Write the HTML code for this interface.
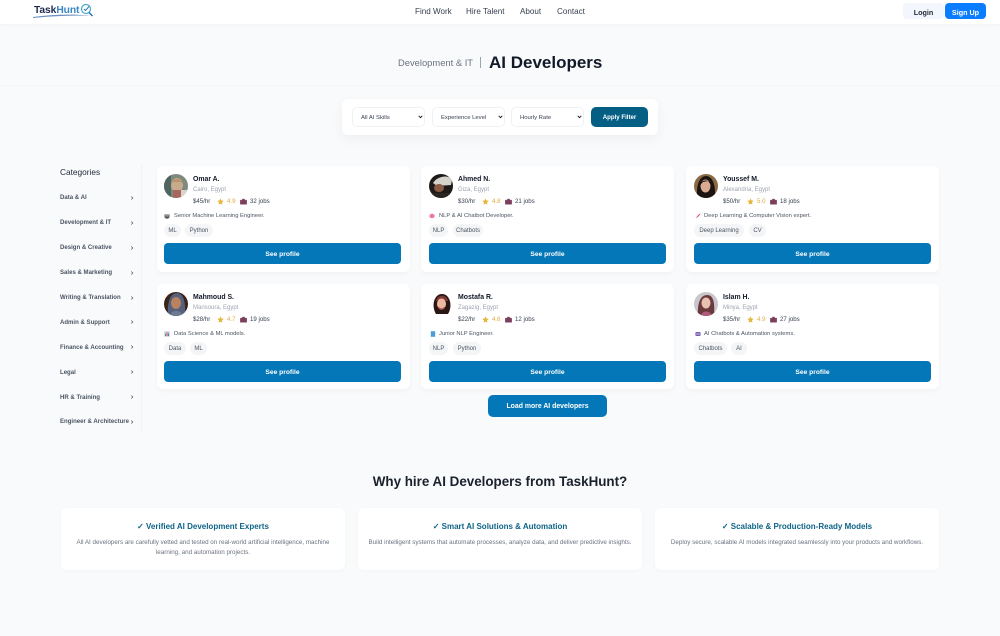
<!DOCTYPE html>
<html lang="en">
<head>
<meta charset="utf-8">
<title>AI Developers - TaskHunt</title>
<style>
*{box-sizing:border-box;margin:0;padding:0}
html,body{width:1000px;height:636px;overflow:hidden;background:#f8fafc;font-family:"Liberation Sans",Arial,sans-serif;color:#1f2937}
.a{position:absolute;white-space:nowrap;line-height:1}
#hd{position:absolute;left:0;top:0;width:1000px;height:24px;background:#fff;box-shadow:0 1px 3px rgba(15,23,42,.03)}
.nav{font-size:8.1px;color:#374151;top:8px}
.box{position:absolute;background:#fff;border-radius:6px;box-shadow:0 2px 6px rgba(15,23,42,.035)}
.sel{position:absolute;top:107px;width:73px;height:20px;background:#fff;border:1px solid #eef1f5;border-radius:5px;font-size:5.9px;color:#374151;line-height:20.5px;padding-left:8px}
.sel svg{position:absolute;right:1.5px;top:7px}
.cat{position:absolute;left:60px;margin-top:1px;font-size:6.05px;font-weight:bold;color:#4b5563;line-height:1;white-space:nowrap}
.chev{position:absolute;left:129.5px;width:4px;height:6px}
.card{position:absolute;width:253px;height:106px;background:#fff;border-radius:6px;box-shadow:0 2px 6px rgba(15,23,42,.035)}
.av{position:absolute;left:7px;top:8px;width:24px;height:24px;border-radius:50%;overflow:hidden}
.n{position:absolute;left:36px;top:10.5px;font-size:6.9px;font-weight:bold;color:#111827;line-height:1;white-space:nowrap}
.l{position:absolute;left:36px;top:21px;font-size:6px;color:#9ca3af;line-height:1;white-space:nowrap}
.m{position:absolute;left:36px;top:31.5px;height:7px;font-size:6.1px;color:#374151;line-height:7px;white-space:nowrap}
.m span,.m svg{position:absolute;top:0}
.m .r{color:#e3a93c}
.d{position:absolute;left:17px;top:47.5px;font-size:5.8px;color:#4b5563;line-height:1;white-space:nowrap}
.ic{position:absolute;left:7px;top:46.5px;width:6px;height:6px}
.t{position:absolute;top:58px;height:13px;border-radius:7px;background:#f4f5f7;font-size:6px;color:#4b5563;line-height:14.5px;text-align:center;white-space:nowrap}
.b{position:absolute;left:7px;top:77px;width:237px;height:21px;border-radius:4px;background:#0477b8;color:#fff;font-size:6.7px;font-weight:bold;line-height:23px;text-align:center}
.x{left:37px}
.why{position:absolute;top:508px;width:284px;height:62px;background:#fff;border-radius:6px;box-shadow:0 1px 4px rgba(15,23,42,.03);text-align:center}
.why h3{position:absolute;left:0;right:0;top:14px;font-size:8px;line-height:9px;color:#0d6488}
.why p{position:absolute;left:10px;right:10px;top:29.5px;font-size:6.25px;line-height:10.4px;color:#6b7280}
</style>
</head>
<body>

<div id="hd"></div>
<svg class="a" style="left:31px;top:1px" width="64" height="20" viewBox="0 0 64 20">
  <path d="M2 16C20 13.5 40 13 60 14.5C40 14.500 20 15 2 17Z" fill="#6a8fc0"/>
  <circle cx="55" cy="8" r="4.5" fill="none" stroke="#4aa9c9" stroke-width="1.2"/>
  <path d="M53 8l1.500 1.500 3.500-4" fill="none" stroke="#2c7fa8" stroke-width="1"/>
  <path d="M58 11.500l3.500 3.500" stroke="#1f6fae" stroke-width="1.400"/>
</svg>
<div class="a" style="left:34px;top:5.5px;font-size:10.3px;font-weight:bold;letter-spacing:-.1px;color:#1f2a4d">Task<span style="color:#3a86c4">Hunt</span></div>

<div class="a nav" style="left:415px">Find Work</div>
<div class="a nav" style="left:466px">Hire Talent</div>
<div class="a nav" style="left:520px">About</div>
<div class="a nav" style="left:557px">Contact</div>

<div class="a" style="left:903px;top:3px;width:41px;height:16px;background:#f3f6fc;border-radius:4px;font-size:7.2px;font-weight:bold;color:#1f2937;line-height:19px;text-align:center">Login</div>
<div class="a" style="left:945px;top:3px;width:41px;height:16px;background:#0a7cff;border-radius:4px;font-size:7.2px;font-weight:bold;color:#fff;line-height:19px;text-align:center">Sign Up</div>

<div class="a" style="left:0;top:85px;width:1000px;height:1px;background:#f3f5f8"></div>

<div class="a" style="left:398px;top:57.5px;font-size:9.4px;color:#6b7280">Development &amp; IT</div>
<div class="a" style="left:480px;top:57px;width:1px;height:11px;background:#9ca3af"></div>
<div class="a" style="left:489px;top:54px;font-size:17px;font-weight:bold;color:#111827">AI Developers</div>

<div class="box" style="left:342px;top:99px;width:316px;height:36px;box-shadow:0 4px 12px rgba(15,23,42,.05)"></div>
<div class="sel" style="left:352px">All AI Skills<svg width="5" height="4" viewBox="0 0 5 4"><path d="M.7.8l1.800 1.900L4.300.8" fill="none" stroke="#222" stroke-width=".9"/></svg></div>
<div class="sel" style="left:432px">Experience Level<svg width="5" height="4" viewBox="0 0 5 4"><path d="M.7.8l1.800 1.900L4.300.8" fill="none" stroke="#222" stroke-width=".9"/></svg></div>
<div class="sel" style="left:511px">Hourly Rate<svg width="5" height="4" viewBox="0 0 5 4"><path d="M.7.8l1.800 1.900L4.300.8" fill="none" stroke="#222" stroke-width=".9"/></svg></div>
<div class="a" style="left:591px;top:107px;width:57px;height:20px;background:#055f85;border-radius:5px;font-size:6.1px;font-weight:bold;color:#fff;line-height:22px;text-align:center">Apply Filter</div>

<div class="a" style="left:60px;top:167.5px;font-size:8.3px;color:#1f2937">Categories</div>
<div class="a" style="left:141px;top:164px;width:1px;height:268px;background:#f1f3f6"></div>
<div class="cat" style="top:194px">Data &amp; AI</div>
<div class="cat" style="top:219px">Development &amp; IT</div>
<div class="cat" style="top:244px">Design &amp; Creative</div>
<div class="cat" style="top:269px">Sales &amp; Marketing</div>
<div class="cat" style="top:294px">Writing &amp; Translation</div>
<div class="cat" style="top:319px">Admin &amp; Support</div>
<div class="cat" style="top:343.5px">Finance &amp; Accounting</div>
<div class="cat" style="top:368.5px">Legal</div>
<div class="cat" style="top:393.5px">HR &amp; Training</div>
<div class="cat" style="top:418px">Engineer &amp; Architecture</div>
<svg class="chev" style="top:195px" viewBox="0 0 4 6"><path d="M1.300 1.500L2.800 3 1.300 4.500" fill="none" stroke="#4b5563" stroke-width=".7"/></svg>
<svg class="chev" style="top:220px" viewBox="0 0 4 6"><path d="M1.300 1.500L2.800 3 1.300 4.500" fill="none" stroke="#4b5563" stroke-width=".7"/></svg>
<svg class="chev" style="top:245px" viewBox="0 0 4 6"><path d="M1.300 1.500L2.800 3 1.300 4.500" fill="none" stroke="#4b5563" stroke-width=".7"/></svg>
<svg class="chev" style="top:269.5px" viewBox="0 0 4 6"><path d="M1.300 1.500L2.800 3 1.300 4.500" fill="none" stroke="#4b5563" stroke-width=".7"/></svg>
<svg class="chev" style="top:294.5px" viewBox="0 0 4 6"><path d="M1.300 1.500L2.800 3 1.300 4.500" fill="none" stroke="#4b5563" stroke-width=".7"/></svg>
<svg class="chev" style="top:319px" viewBox="0 0 4 6"><path d="M1.300 1.500L2.800 3 1.300 4.500" fill="none" stroke="#4b5563" stroke-width=".7"/></svg>
<svg class="chev" style="top:344px" viewBox="0 0 4 6"><path d="M1.300 1.500L2.800 3 1.300 4.500" fill="none" stroke="#4b5563" stroke-width=".7"/></svg>
<svg class="chev" style="top:369px" viewBox="0 0 4 6"><path d="M1.300 1.500L2.800 3 1.300 4.500" fill="none" stroke="#4b5563" stroke-width=".7"/></svg>
<svg class="chev" style="top:394px" viewBox="0 0 4 6"><path d="M1.300 1.500L2.800 3 1.300 4.500" fill="none" stroke="#4b5563" stroke-width=".7"/></svg>
<svg class="chev" style="top:418.5px" viewBox="0 0 4 6"><path d="M1.300 1.500L2.800 3 1.300 4.500" fill="none" stroke="#4b5563" stroke-width=".7"/></svg>

<!-- Row 1 -->
<div class="card" style="left:157px;top:166px">
  <svg class="av" viewBox="0 0 24 24"><rect width="24" height="24" fill="#7d8a7c"/><rect width="7" height="24" fill="#4f6660"/><ellipse cx="13" cy="11" rx="6" ry="7" fill="#c8ab8c"/><path d="M7 10C8 3 18 3 19 10L17 8H9Z" fill="#b89470"/><rect x="9" y="16" width="8" height="8" fill="#a8665c"/><rect x="17" y="16" width="7" height="8" fill="#d9d5cd"/></svg>
  <div class="n">Omar A.</div><div class="l">Cairo, Egypt</div>
  <div class="m"><span style="left:0">$45/hr</span><svg style="left:24px" width="7" height="7" viewBox="0 0 10 10"><path d="M5 .5l1.400 3 3.200.4-2.400 2.200.6 3.200L5 8.200 2.200 9.300l.6-3.200L.4 3.900l3.200-.4z" fill="#e5b53d"/></svg><span class="r" style="left:34px">4.9</span><svg style="left:47px" width="7" height="7" viewBox="0 0 10 10"><path d="M.5 3h9v6h-9zM3.500 3V1.500h3V3" fill="#7b3f5d" stroke="#7b3f5d" stroke-width=".6"/></svg><span style="left:57px">32 jobs</span></div>
  <svg class="ic" viewBox="0 0 6 6"><path d="M.5 1.500h5v2.500C5.500 5 4 5.700 3 5.700S.5 5 .5 4z" fill="#555"/><rect x="1" y="2.500" width="4" height=".8" fill="#ccc"/></svg>
  <div class="d">Senior Machine Learning Engineer.</div>
  <div class="t" style="left:7px;width:17px">ML</div><div class="t" style="left:28px;width:28px">Python</div>
  <div class="b">See profile</div>
</div>
<div class="card" style="left:421px;top:166px">
  <svg class="av" style="left:8px" viewBox="0 0 24 24"><rect width="24" height="24" fill="#1d1a18"/><path d="M4 9C8 2 20 0 23 6L22 11 8 12Z" fill="#d5d2cc"/><ellipse cx="10" cy="14" rx="5" ry="4" fill="#8a5a44"/><rect y="19" width="24" height="5" fill="#2a2421"/></svg>
  <div class="n x">Ahmed N.</div><div class="l x">Giza, Egypt</div>
  <div class="m x"><span style="left:0">$30/hr</span><svg style="left:24px" width="7" height="7" viewBox="0 0 10 10"><path d="M5 .5l1.400 3 3.200.4-2.400 2.200.6 3.200L5 8.200 2.200 9.300l.6-3.200L.4 3.900l3.200-.4z" fill="#e5b53d"/></svg><span class="r" style="left:34px">4.8</span><svg style="left:47px" width="7" height="7" viewBox="0 0 10 10"><path d="M.5 3h9v6h-9zM3.500 3V1.500h3V3" fill="#7b3f5d" stroke="#7b3f5d" stroke-width=".6"/></svg><span style="left:57px">21 jobs</span></div>
  <svg class="ic" style="left:8px" viewBox="0 0 6 6"><ellipse cx="3" cy="3" rx="2.800" ry="2.200" fill="#ee7fae"/><path d="M3 1v4" stroke="#c9598a" stroke-width=".4"/></svg>
  <div class="d" style="left:18px">NLP &amp; AI Chatbot Developer.</div>
  <div class="t" style="left:8px;width:19px">NLP</div><div class="t" style="left:32px;width:30px">Chatbots</div>
  <div class="b" style="left:8px">See profile</div>
</div>
<div class="card" style="left:686px;top:166px">
  <svg class="av" style="left:8px" viewBox="0 0 24 24"><rect width="24" height="24" fill="#8a6a45"/><path d="M3 24C2 8 7 2 12 2s10 6 9 22Z" fill="#1c1412"/><ellipse cx="11.500" cy="12" rx="5" ry="6.500" fill="#d8ab92"/><path d="M6 11C7 5 16 5 17 11L14 7 9 8Z" fill="#1c1412"/></svg>
  <div class="n x">Youssef M.</div><div class="l x">Alexandria, Egypt</div>
  <div class="m x"><span style="left:0">$50/hr</span><svg style="left:24px" width="7" height="7" viewBox="0 0 10 10"><path d="M5 .5l1.400 3 3.200.4-2.400 2.200.6 3.200L5 8.200 2.200 9.300l.6-3.200L.4 3.900l3.200-.4z" fill="#e5b53d"/></svg><span class="r" style="left:34px">5.0</span><svg style="left:47px" width="7" height="7" viewBox="0 0 10 10"><path d="M.5 3h9v6h-9zM3.500 3V1.500h3V3" fill="#7b3f5d" stroke="#7b3f5d" stroke-width=".6"/></svg><span style="left:57px">18 jobs</span></div>
  <svg class="ic" style="left:9px" viewBox="0 0 6 6"><path d="M5.500.5C4 1 2.500 2.500 1.800 3.800L.5 5.500 2.300 4.300C3.600 3.500 5 2 5.500.5Z" fill="#d84a6a"/></svg>
  <div class="d" style="left:18px">Deep Learning &amp; Computer Vision expert.</div>
  <div class="t" style="left:8px;width:50px">Deep Learning</div><div class="t" style="left:63px;width:17px">CV</div>
  <div class="b" style="left:8px">See profile</div>
</div>

<!-- Row 2 -->
<div class="card" style="left:157px;top:284px;height:105px">
  <svg class="av" viewBox="0 0 24 24"><rect width="24" height="24" fill="#3a2418"/><path d="M4 24C3 8 7 1 13 1s9 8 8 23Z" fill="#54607c"/><ellipse cx="12" cy="11" rx="5" ry="6" fill="#b9835f"/><path d="M6 24C7 17 17 17 19 24Z" fill="#6d7a92"/></svg>
  <div class="n">Mahmoud S.</div><div class="l">Mansoura, Egypt</div>
  <div class="m"><span style="left:0">$28/hr</span><svg style="left:24px" width="7" height="7" viewBox="0 0 10 10"><path d="M5 .5l1.400 3 3.200.4-2.400 2.200.6 3.200L5 8.200 2.200 9.300l.6-3.200L.4 3.900l3.200-.4z" fill="#e5b53d"/></svg><span class="r" style="left:34px">4.7</span><svg style="left:47px" width="7" height="7" viewBox="0 0 10 10"><path d="M.5 3h9v6h-9zM3.500 3V1.500h3V3" fill="#7b3f5d" stroke="#7b3f5d" stroke-width=".6"/></svg><span style="left:57px">19 jobs</span></div>
  <svg class="ic" viewBox="0 0 6 6"><rect x=".3" y=".3" width="5.400" height="5.400" fill="#c7ccd8"/><rect x="1" y="3" width="1" height="2" fill="#4aa06a"/><rect x="2.500" y="1.500" width="1" height="3.500" fill="#d8566a"/><rect x="4" y="2.300" width="1" height="2.700" fill="#4a7fc0"/></svg>
  <div class="d">Data Science &amp; ML models.</div>
  <div class="t" style="left:7px;width:22px">Data</div><div class="t" style="left:33px;width:17px">ML</div>
  <div class="b">See profile</div>
</div>
<div class="card" style="left:421px;top:284px;height:105px">
  <svg class="av" style="left:8px" viewBox="0 0 24 24"><rect width="24" height="24" fill="#fff"/><path d="M7 22C2 14 5 2 13 2s11 12 6 20Z" fill="#2a1714"/><path d="M7 9C8 2 18 2 19 9Z" fill="#7c3a34"/><ellipse cx="12.500" cy="12" rx="4.500" ry="5.500" fill="#eeb79f"/><path d="M9 15c2 2 5 2 7 0" stroke="#a8443c" stroke-width=".8" fill="none"/></svg>
  <div class="n x">Mostafa R.</div><div class="l x">Zagazig, Egypt</div>
  <div class="m x"><span style="left:0">$22/hr</span><svg style="left:24px" width="7" height="7" viewBox="0 0 10 10"><path d="M5 .5l1.400 3 3.200.4-2.400 2.200.6 3.200L5 8.200 2.200 9.300l.6-3.200L.4 3.900l3.200-.4z" fill="#e5b53d"/></svg><span class="r" style="left:34px">4.6</span><svg style="left:47px" width="7" height="7" viewBox="0 0 10 10"><path d="M.5 3h9v6h-9zM3.500 3V1.500h3V3" fill="#7b3f5d" stroke="#7b3f5d" stroke-width=".6"/></svg><span style="left:57px">12 jobs</span></div>
  <svg class="ic" style="left:9px" viewBox="0 0 6 6"><rect x=".8" y=".2" width="4.400" height="5.600" fill="#4a9fd8"/></svg>
  <div class="d" style="left:18px">Junior NLP Engineer.</div>
  <div class="t" style="left:8px;width:19px">NLP</div><div class="t" style="left:32px;width:28px">Python</div>
  <div class="b" style="left:8px">See profile</div>
</div>
<div class="card" style="left:686px;top:284px;height:105px">
  <svg class="av" style="left:8px" viewBox="0 0 24 24"><rect width="24" height="24" fill="#c9c7cc"/><path d="M4 24C3 10 7 3 13 3s8 6 7 21Z" fill="#6b3a3c"/><ellipse cx="12" cy="11" rx="4.500" ry="5.500" fill="#e8c0b0"/><path d="M7 24C8 18 16 18 18 24Z" fill="#b05a7c"/></svg>
  <div class="n x">Islam H.</div><div class="l x">Minya, Egypt</div>
  <div class="m x"><span style="left:0">$35/hr</span><svg style="left:24px" width="7" height="7" viewBox="0 0 10 10"><path d="M5 .5l1.400 3 3.200.4-2.400 2.200.6 3.200L5 8.200 2.200 9.300l.6-3.200L.4 3.900l3.200-.4z" fill="#e5b53d"/></svg><span class="r" style="left:34px">4.9</span><svg style="left:47px" width="7" height="7" viewBox="0 0 10 10"><path d="M.5 3h9v6h-9zM3.500 3V1.500h3V3" fill="#7b3f5d" stroke="#7b3f5d" stroke-width=".6"/></svg><span style="left:57px">27 jobs</span></div>
  <svg class="ic" style="left:9px" viewBox="0 0 6 6"><rect x=".4" y="1" width="5.200" height="4" rx="1" fill="#7a5fb0"/><circle cx="2" cy="3" r=".6" fill="#fff"/><circle cx="4" cy="3" r=".6" fill="#fff"/></svg>
  <div class="d" style="left:18px">AI Chatbots &amp; Automation systems.</div>
  <div class="t" style="left:8px;width:33px">Chatbots</div><div class="t" style="left:45px;width:16px">AI</div>
  <div class="b" style="left:8px">See profile</div>
</div>

<div class="a" style="left:488px;top:395px;width:119px;height:22px;background:#0477b8;border-radius:5px;color:#fff;font-size:6.9px;font-weight:bold;line-height:24px;text-align:center">Load more AI developers</div>

<div class="a" style="left:0;top:474.500px;width:1000px;text-align:center;font-size:13.4px;font-weight:bold;color:#1a202c">Why hire AI Developers from TaskHunt?</div>

<div class="why" style="left:61px"><h3>✓ Verified AI Development Experts</h3><p>All AI developers are carefully vetted and tested on real-world artificial intelligence, machine learning, and automation projects.</p></div>
<div class="why" style="left:358px"><h3>✓ Smart AI Solutions &amp; Automation</h3><p style="left:4px;right:4px">Build intelligent systems that automate processes, analyze data, and deliver predictive insights.</p></div>
<div class="why" style="left:655px"><h3>✓ Scalable &amp; Production-Ready Models</h3><p style="left:4px;right:4px">Deploy secure, scalable AI models integrated seamlessly into your products and workflows.</p></div>

</body>
</html>
